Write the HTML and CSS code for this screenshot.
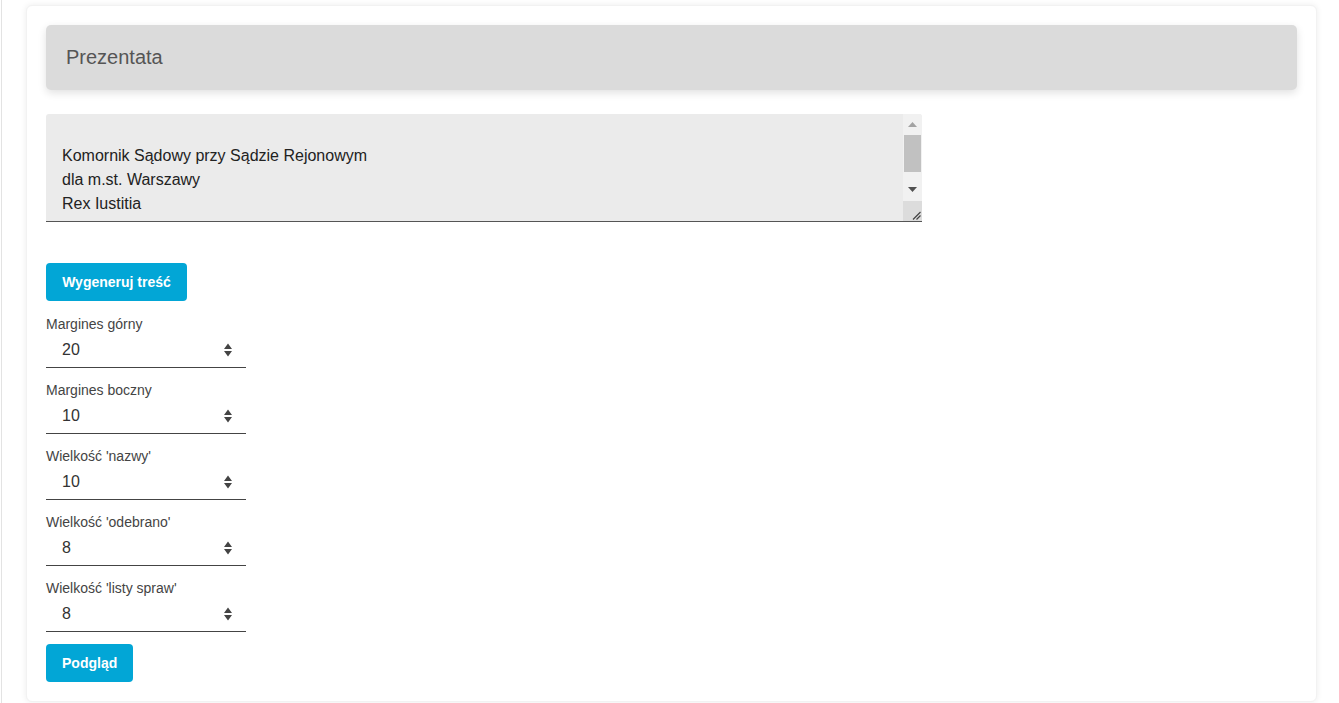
FILE: index.html
```html
<!DOCTYPE html>
<html lang="pl">
<head>
<meta charset="utf-8">
<title>Prezentata</title>
<link rel="stylesheet" href="styles.css">
</head>
<body>
<div class="page">
  <div class="card">
    <div class="card-header">Prezentata</div>
    <div class="textbox">
      <textarea class="content" rows="4">

Komornik Sądowy przy Sądzie Rejonowym
dla m.st. Warszawy
Rex Iustitia
</textarea>
      <div class="scrollbar">
        <div class="sb-btn sb-up"><svg width="9" height="5" viewBox="0 0 9 5"><path d="M4.5 0 L9 5 H0 Z" fill="#a3a3a3"/></svg></div>
        <div class="sb-track"><div class="sb-thumb"></div></div>
        <div class="sb-btn sb-down"><svg width="9" height="5" viewBox="0 0 9 5"><path d="M0 0 H9 L4.5 5 Z" fill="#505050"/></svg></div>
        <div class="sb-corner"><svg width="10" height="10" viewBox="0 0 10 10"><path d="M2 9.5 L9.5 2 M5.5 9.5 L9.5 5.5" stroke="#444" stroke-width="1.2" fill="none"/></svg></div>
      </div>
    </div>
    <button class="btn btn-generate" type="button">Wygeneruj treść</button>
    <div class="fields">
      <div class="field">
        <label class="field-label">Margines górny</label>
        <div class="num">
          <input class="num-input" type="text" value="20">
          <svg class="spin" width="8" height="14" viewBox="0 0 8 14"><path d="M4 0.5 L8 6 H0 Z M0 8 H8 L4 13.5 Z" fill="#444"/></svg>
        </div>
      </div>
      <div class="field">
        <label class="field-label">Margines boczny</label>
        <div class="num">
          <input class="num-input" type="text" value="10">
          <svg class="spin" width="8" height="14" viewBox="0 0 8 14"><path d="M4 0.5 L8 6 H0 Z M0 8 H8 L4 13.5 Z" fill="#444"/></svg>
        </div>
      </div>
      <div class="field">
        <label class="field-label">Wielkość 'nazwy'</label>
        <div class="num">
          <input class="num-input" type="text" value="10">
          <svg class="spin" width="8" height="14" viewBox="0 0 8 14"><path d="M4 0.5 L8 6 H0 Z M0 8 H8 L4 13.5 Z" fill="#444"/></svg>
        </div>
      </div>
      <div class="field">
        <label class="field-label">Wielkość 'odebrano'</label>
        <div class="num">
          <input class="num-input" type="text" value="8">
          <svg class="spin" width="8" height="14" viewBox="0 0 8 14"><path d="M4 0.5 L8 6 H0 Z M0 8 H8 L4 13.5 Z" fill="#444"/></svg>
        </div>
      </div>
      <div class="field">
        <label class="field-label">Wielkość 'listy spraw'</label>
        <div class="num">
          <input class="num-input" type="text" value="8">
          <svg class="spin" width="8" height="14" viewBox="0 0 8 14"><path d="M4 0.5 L8 6 H0 Z M0 8 H8 L4 13.5 Z" fill="#444"/></svg>
        </div>
      </div>
    </div>
    <button class="btn btn-preview" type="button">Podgląd</button>
  </div>
</div>
</body>
</html>
```

FILE: styles.css
```css
* { box-sizing: border-box; }

html, body {
  margin: 0;
  padding: 0;
  background: #fff;
  font-family: "Liberation Sans", Arial, sans-serif;
  color: #444;
}

.page {
  margin-left: 1px;
  border-left: 1px solid #e3e3e3;
  padding: 5px 20px 0 24px;
  height: 703px;
  overflow: hidden;
}

.card {
  width: 1291px;
  background: #fff;
  border-radius: 6px;
  box-shadow: 0 0 6px rgba(0, 0, 0, 0.08);
  border: 1px solid #f2f2f2;
  padding: 19px 19px 19px;
  display: flex;
  flex-direction: column;
  align-items: flex-start;
}

.card-header {
  align-self: stretch;
  height: 65px;
  background: #dbdbdb;
  border-radius: 5px;
  box-shadow: 0 3px 8px rgba(0, 0, 0, 0.12);
  font-size: 20px;
  color: #555;
  padding-left: 20px;
  display: flex;
  align-items: center;
}

.textbox {
  margin-top: 24px;
  width: 876px;
  height: 108px;
  background: #ebebeb;
  border-bottom: 1px solid #555;
  border-radius: 3px 3px 0 0;
  display: flex;
}

.content {
  flex: 1;
  min-width: 0;
  height: 100%;
  background: transparent;
  border: none;
  outline: none;
  font-family: "Liberation Sans", Arial, sans-serif;
  font-size: 16px;
  line-height: 24px;
  color: #222;
  padding: 6px 16px 0;
  resize: none;
  overflow: hidden;
}

.scrollbar {
  width: 19px;
  height: 100%;
  background: #f1f1f1;
  border-top-right-radius: 3px;
  display: flex;
  flex-direction: column;
  align-items: stretch;
}

.sb-btn {
  display: flex;
  align-items: center;
  justify-content: center;
}

.sb-up {
  height: 20px;
  padding-top: 1px;
}

.sb-down {
  height: 19px;
}

.sb-track {
  height: 46px;
  padding: 1px 1px 0 1px;
  display: flex;
  flex-direction: column;
}

.sb-thumb {
  height: 37px;
  background: #c1c1c1;
}

.sb-corner {
  margin-top: 2px;
  height: 20px;
  background: #dcdcdc;
  display: flex;
  align-items: flex-end;
  justify-content: flex-end;
  padding: 0 1px 1px 0;
}

.btn {
  height: 38px;
  border: none;
  border-radius: 4px;
  background: #02a6d6;
  color: #fff;
  font-family: "Liberation Sans", Arial, sans-serif;
  font-size: 14px;
  font-weight: bold;
  padding: 0 16px;
  cursor: pointer;
}

.btn-generate {
  margin-top: 41px;
  width: 141px;
}

.btn-preview {
  margin-top: 12px;
  width: 87px;
}

.fields {
  margin-top: 15px;
  display: flex;
  flex-direction: column;
  gap: 14px;
}

.field {
  display: flex;
  flex-direction: column;
}

.field-label {
  font-size: 14px;
  line-height: 17px;
  color: #444;
}

.num {
  width: 200px;
  height: 35px;
  border-bottom: 1px solid #444;
  display: flex;
  align-items: center;
  padding: 0 14px 0 16px;
}

.num-input {
  flex: 1;
  min-width: 0;
  border: none;
  outline: none;
  background: transparent;
  font-family: "Liberation Sans", Arial, sans-serif;
  font-size: 16px;
  color: #333;
  padding: 0;
}

.spin {
  flex: none;
}
```
